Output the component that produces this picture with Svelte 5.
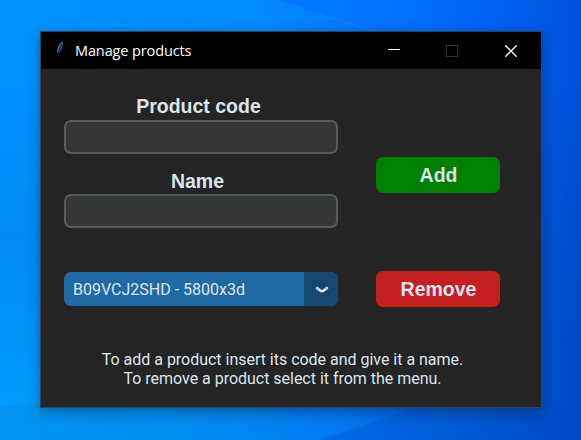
<script>
  let code = $state('');
  let name = $state('');
  let selected = $state('B09VCJ2SHD - 5800x3d');
</script>

<div class="desktop">
  <svg class="wallpaper" viewBox="0 0 581 440" width="581" height="440" aria-hidden="true">
    <defs>
      <linearGradient id="sky" gradientUnits="userSpaceOnUse" x1="0" x2="581" y1="0" y2="0">
        <stop offset="0" stop-color="#0095ff" />
        <stop offset="0.45" stop-color="#008aff" />
        <stop offset="0.68" stop-color="#0072ff" />
        <stop offset="0.86" stop-color="#0060f4" />
        <stop offset="1" stop-color="#0052da" />
      </linearGradient>
      <linearGradient id="low" gradientUnits="userSpaceOnUse" x1="0" x2="581" y1="0" y2="0">
        <stop offset="0" stop-color="#0096f0" />
        <stop offset="0.3" stop-color="#0090ee" />
        <stop offset="0.6" stop-color="#0078f0" />
        <stop offset="0.85" stop-color="#0058d6" />
        <stop offset="1" stop-color="#004ac4" />
      </linearGradient>
      <linearGradient id="fade" x1="0" x2="0" y1="0" y2="1">
        <stop offset="0" stop-color="#000" />
        <stop offset="0.75" stop-color="#fff" />
      </linearGradient>
      <mask id="lower"><rect y="60" width="581" height="380" fill="url(#fade)" /></mask>
      <linearGradient id="ray" gradientUnits="userSpaceOnUse" x1="320" x2="581" y1="0" y2="0">
        <stop offset="0" stop-color="#006ce6" />
        <stop offset="0.45" stop-color="#005dd6" />
        <stop offset="1" stop-color="#004ac4" />
      </linearGradient>
      <linearGradient id="beam" gradientUnits="userSpaceOnUse" x1="278" x2="430" y1="0" y2="0">
        <stop offset="0" stop-color="#006cff" stop-opacity=".6" />
        <stop offset="1" stop-color="#006cff" stop-opacity="0" />
      </linearGradient>
      <linearGradient id="side" x1="0" x2="0" y1="0" y2="1">
        <stop offset="0" stop-color="#0095ff" />
        <stop offset="0.55" stop-color="#008cf4" />
        <stop offset="1" stop-color="#009cff" />
      </linearGradient>
    </defs>
    <rect width="581" height="440" fill="url(#sky)" />
    <path d="M275 0H430V48Z" fill="url(#beam)" />
    <path d="M275 0 380 33" stroke="#1a90ff" opacity=".5" fill="none" />
    <rect width="581" height="440" fill="url(#low)" mask="url(#lower)" />
    <path d="M0 34H50V400L0 406Z" fill="url(#side)" />
    <path d="M0 406.5 50 400" stroke="#10a4ff" opacity=".7" fill="none" />
    <path d="M318 440 420 406H581V440Z" fill="url(#ray)" />
  </svg>

  <main class="window">
    <header>
      <svg class="feather" width="12" height="20" viewBox="0 0 12 20" aria-hidden="true">
        <path d="M9.2 1.5C6 2.5 3.4 6.5 3 12.5L4.8 13.5C7.5 10.5 9 6.5 9.2 1.5Z" fill="#305a94" />
        <path d="M8 2.4C5 4.6 3.8 8 3.6 12" stroke="#6c7884" fill="none" />
        <path d="M7.6 4C6 8 4 13 3.4 18" stroke="#101620" fill="none" />
      </svg>
      <h1>Manage products</h1>
      <nav>
        <button aria-label="Minimize"><svg width="12" height="12"><path d="M0 4.5H12" stroke="#fff" /></svg></button>
        <button aria-label="Maximize" disabled><svg width="12" height="12"><rect x=".5" y=".5" width="11" height="11" fill="none" stroke="#333" /></svg></button>
        <button aria-label="Close"><svg width="12" height="12"><path d="M.3.3 11.7 11.7M11.7.3.3 11.7" stroke="#fff" stroke-width="1.25" /></svg></button>
      </nav>
    </header>

    <section class="form">
      <div class="fields">
        <label for="code">Product code</label>
        <input id="code" bind:value={code} />
        <label class="second" for="name">Name</label>
        <input id="name" bind:value={name} />
        <button class="combo">
          <span>{selected}</span>
          <i><svg width="14" height="8" viewBox="0 0 14 8"><path d="M2.1 2.2 5.2 4.5Q7 5.8 8.8 4.5L11.9 2.2" fill="none" stroke="#dce4ee" stroke-width="2.7" stroke-linecap="round" stroke-linejoin="round" /><path d="M2.2 2.3 3.6 3.3M11.8 2.3 10.4 3.3" stroke="#144870" stroke-width=".8" opacity=".6" /></svg></i>
        </button>
      </div>
      <div class="actions">
        <button class="add">Add</button>
        <button class="remove">Remove</button>
      </div>
    </section>

    <p>To add a product insert its code and give it a name.<br />To remove a product select it from the menu.</p>
  </main>
</div>

<style>
  :global(body) { margin: 0; overflow: hidden; }
  .desktop {
    width: 581px; height: 440px; box-sizing: border-box; padding: 31px 0 0 40px;
    position: relative; overflow: hidden; background: #0080f0;
  }
  .wallpaper { position: absolute; inset: 0; }
  .window {
    position: relative; width: 502px; height: 377px; box-sizing: border-box;
    border: 1px solid #29445c; background: #242424; color: #dce4ee;
    box-shadow: 0 4px 13px rgba(0, 20, 60, .42);
    font-family: Roboto, sans-serif;
  }
  button { border: 0; padding: 0; background: none; color: inherit; font: inherit; }
  header { height: 37px; display: flex; align-items: center; background: #000; color: #fff; }
  .feather { margin: -2px 8px 0 13px; }
  h1 {
    margin: 0; padding-left: 1px; flex: 1; font: 400 14.5px/20px "Open Sans", sans-serif;
    letter-spacing: -.12px;
  }
  nav { display: flex; height: 37px; padding-right: 1px; }
  nav button { width: 58.5px; display: grid; place-items: center; }
  nav svg { display: block; }
  .form { display: flex; gap: 38px; padding: 25px 0 0 23px; }
  .fields { width: 274px; display: flex; flex-direction: column; }
  label {
    height: 26px; text-align: center; text-indent: -5px;
    font: 700 19.5px/24px "Liberation Sans", Arial, sans-serif;
  }
  .second { margin-top: 15px; height: 25px; text-indent: -7px; }
  input {
    box-sizing: border-box; width: 274px; height: 34px; padding: 0 8px;
    border: 2px solid #565b5e; border-radius: 7px; background: #343638;
    color: #dce4ee; outline: none;
  }
  .combo {
    display: flex; width: 274px; height: 34px; margin-top: 44px; overflow: hidden;
    border-radius: 7px; background: #1f6aa5; text-align: left;
  }
  .combo span { flex: 1; padding-left: 9px; font-size: 16px; line-height: 36px; }
  .combo i { width: 34px; height: 34px; display: grid; place-items: center; background: #144870; }
  .combo svg { display: block; margin: 2px 0 0 2px; }
  .actions { padding-top: 63px; display: flex; flex-direction: column; gap: 78px; }
  .actions button {
    width: 124px; height: 36px; border-radius: 7px; text-indent: 1px;
    font: 700 19.5px/36px "Liberation Sans", Arial, sans-serif;
  }
  .add { background: #008000; }
  .remove { background: #c41e1e; }
  p {
    margin: 43px 0 0; padding-right: 17px; text-align: center;
    font-size: 16px; line-height: 19px; letter-spacing: -.02px;
  }
</style>
